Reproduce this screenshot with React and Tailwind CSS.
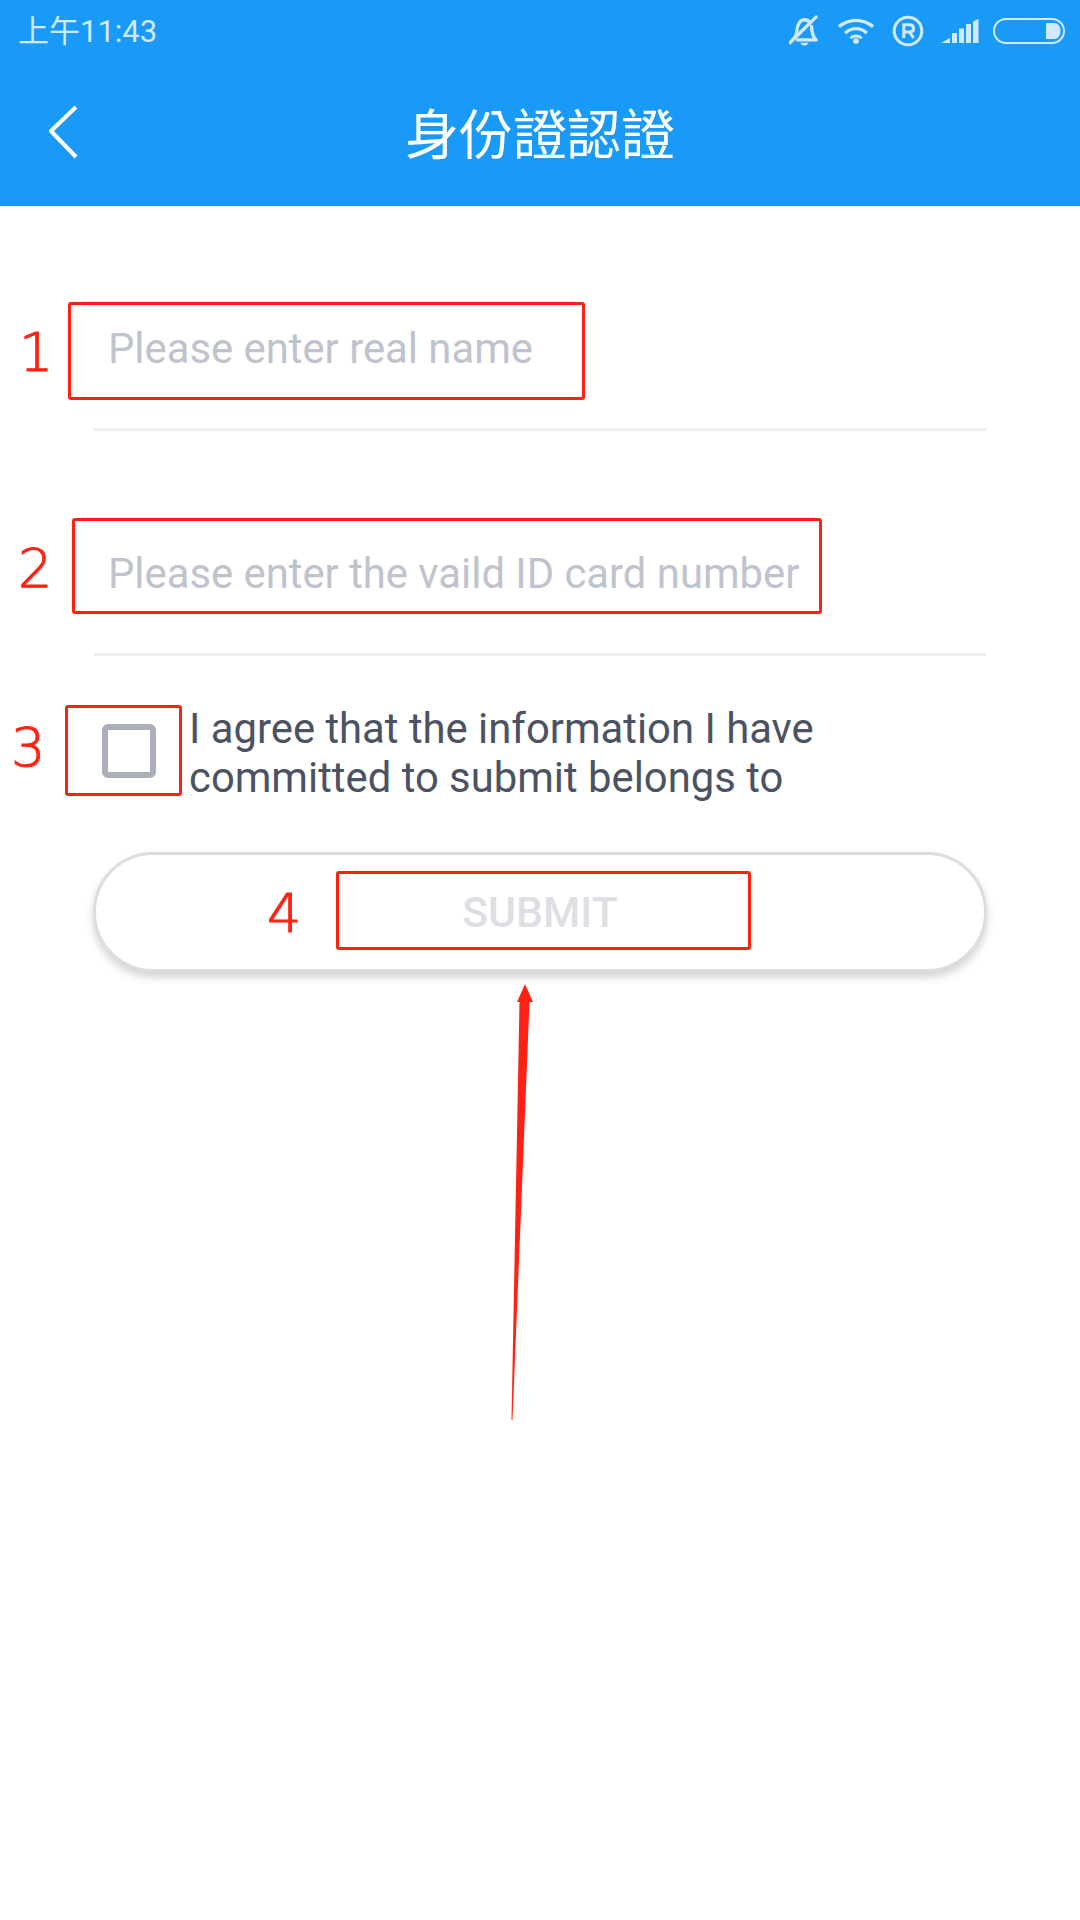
import React from "react";

const StatusIcons = () => (
  <div className="flex items-center">
    {/* muted bell */}
    <svg width="30" height="34" viewBox="0 0 32 34" fill="none" stroke="#d2e9fc" strokeWidth="3.500">
      <path d="M4 26c3-2 4-5 4.500-10C9 10 12 5 16.500 5c2.500 0 4.500 1 6 3" strokeLinecap="round" />
      <path d="M24 12c.5 6 1 11 5 14.500H9" strokeLinecap="round" strokeLinejoin="round" />
      <path d="M1 29.500 29 2" strokeLinecap="round" />
      <path d="M12 29.500h9c-1 2-2.500 3-4.500 3s-3.500-1-4.500-3z" fill="#d2e9fc" stroke="none" />
    </svg>
    {/* wifi */}
    <svg width="38" height="28" viewBox="0 0 40 28" fill="none" stroke="#d2e9fc" strokeWidth="3.500" className="ml-[18px]">
      <path d="M2 9.500c10.500-9 25.500-9 36 0" />
      <path d="M8.500 16c7-6 16-6 23 0" />
      <path d="M14 21.500c3.500-3 8.500-3 12 0" strokeWidth="3" />
      <circle cx="20" cy="24.500" r="3" fill="#d2e9fc" stroke="none" />
    </svg>
    {/* registered */}
    <svg width="32" height="32" viewBox="0 0 32 32" fill="none" stroke="#d2e9fc" className="ml-[17px]">
      <circle cx="16" cy="16" r="13.800" strokeWidth="3" />
      <path d="M11.800 23V9.800h5.700c2.600 0 4 1.400 4 3.600s-1.400 3.600-4 3.600h-5.700M17.500 17l4 6" strokeWidth="3" />
    </svg>
    {/* signal */}
    <svg width="38" height="26" viewBox="0 0 38 26" fill="#d2e9fc" className="ml-[17px]">
      <path d="M0 25 9 20v5z" />
      <rect x="11" y="15" width="5" height="10" />
      <rect x="18" y="10.500" width="5" height="14.500" />
      <rect x="25" y="6" width="5" height="19" />
      <path d="M32 3.500 37.500 1v24H32z" />
    </svg>
    {/* battery */}
    <svg width="72" height="26" viewBox="0 0 72 26" fill="none" className="ml-[14px]">
      <rect x="1" y="1" width="70" height="24" rx="12" stroke="#d2e9fc" strokeWidth="2" />
      <path d="M53 5h8c4 0 6.500 3.500 6.500 8s-2.500 8-6.500 8h-8z" fill="#d2e9fc" />
    </svg>
  </div>
);

const Marker = ({ className }) => (
  <div className={`absolute border-[3px] border-[#ff2214] rounded-[3px] ${className}`} />
);

const Num = ({ className, children }) => (
  <span className={`absolute text-[54px] leading-none text-[#ff2214] font-['DejaVu_Sans',sans-serif] font-extralight [-webkit-text-stroke:1px_#ff2214] ${className}`}>
    {children}
  </span>
);

const App = () => {
  return (
    <div className="relative w-[1080px] h-[1920px] bg-white overflow-hidden font-['Roboto',sans-serif]">
      <header className="bg-[#1a9af7] h-[206px] flex flex-col">
        <div className="h-[62px] flex items-center justify-between pl-[18px] pr-[15px]">
          <span className="text-[31px] leading-none text-[#d2e9fc] font-['Roboto','Noto_Sans_CJK_TC',sans-serif]">上午11:43</span>
          <StatusIcons />
        </div>
        <div className="flex-1 grid grid-cols-[1fr_auto_1fr] items-center">
          <svg width="32" height="54" viewBox="0 0 32 54" fill="none" stroke="white" strokeWidth="4" className="ml-[47px] -mt-[4px]">
            <path d="M29 2 4 26l25 26" strokeLinejoin="round" />
          </svg>
          <h1 className="text-[54px] leading-none text-white font-normal font-['Noto_Sans_CJK_TC',sans-serif] -mt-[4px]">身份證認證</h1>
        </div>
      </header>

      <form className="px-[93px]">
        <div className="h-[225px] pt-[119px] pl-[15px] border-b-[3px] border-[#eef0f3]">
          <div className="text-[41.8px] leading-[48px] text-[#bfc3cd]">Please enter real name</div>
        </div>
        <div className="h-[225px] pt-[119px] pl-[15px] border-b-[3px] border-[#eef0f3]">
          <div className="text-[41.8px] leading-[48px] text-[#bfc3cd] whitespace-nowrap">Please enter the vaild ID card number</div>
        </div>
        <label className="flex pt-[48px] -mr-[93px]">
          <span className="mt-[20px] ml-[9px] w-[54px] h-[54px] border-[6px] border-[#abafb9] rounded-[6px] shrink-0" />
          <span className="ml-[33px] text-[41.8px] leading-[49px] text-[#4b5363]">
            I agree that the information I have
            <br />
            committed to submit belongs to
          </span>
        </label>
        <button type="button" className="mt-[50px] w-[894px] h-[120px] rounded-full bg-white border-[3px] border-[#dcdde3] shadow-[0_5px_8px_rgba(0,0,0,0.18)] text-[42.7px] font-medium text-[#dedfe5]">
          SUBMIT
        </button>
      </form>

      {/* red annotations drawn over the screenshot */}
      <Marker className="left-[68px] top-[302px] w-[517px] h-[98px]" />
      <Marker className="left-[72px] top-[518px] w-[750px] h-[96px]" />
      <Marker className="left-[65px] top-[705px] w-[117px] h-[91px]" />
      <Marker className="left-[336px] top-[871px] w-[415px] h-[79px]" />
      <Num className="left-[19px] top-[326px]">1</Num>
      <Num className="left-[18px] top-[542px]">2</Num>
      <Num className="left-[11px] top-[721px]">3</Num>
      <Num className="left-[267px] top-[887px]">4</Num>
      <svg width="24" height="440" viewBox="0 0 24 440" className="absolute left-[509px] top-[982px]">
        <path d="M16 2 24 20H20.500L3.500 438 2.500 438 10.500 20H8z" fill="#ff2214" />
      </svg>
    </div>
  );
};

export default App;
